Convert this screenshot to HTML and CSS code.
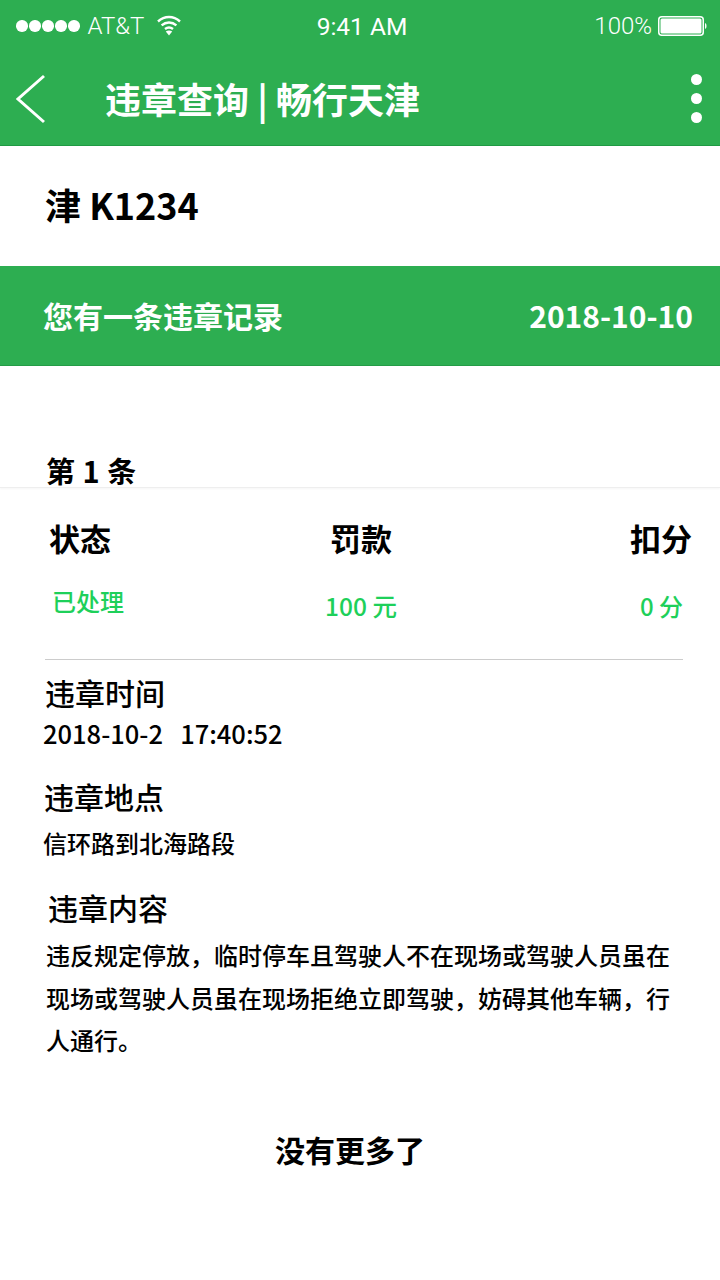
FILE: index.html
```html
<!DOCTYPE html>
<html lang="zh-CN">
<head>
<meta charset="utf-8">
<title>违章查询</title>
<link rel="stylesheet" href="styles.css">
</head>
<body>
<div class="app">
  <header class="top">
    <div class="status">
      <div class="status-left">
        <span class="dots"><i></i><i></i><i></i><i></i><i></i></span>
        <span class="carrier">AT&amp;T</span>
        <svg class="wifi" width="24" height="22" viewBox="0 0 24 22"><path d="M1 7.500C7.500 1.500 16.500 1.500 23 7.500M4.600 11.300C9 7.500 15 7.500 19.400 11.300M8 15C10.300 13.200 13.700 13.200 16 15" fill="none" stroke="#fff" stroke-width="2.400"/><path d="M12 21.500L8.800 17.500C10.800 16 13.200 16 15.200 17.500Z" fill="#fff"/></svg>
      </div>
      <div class="time">9:41 AM</div>
      <div class="status-right">
        <span class="pct">100%</span>
        <svg class="battery" width="50" height="20" viewBox="0 0 50 20"><rect x=".75" y=".75" width="44.500" height="18.500" rx="3" fill="none" stroke="#fff" stroke-width="1.500"/><rect x="2.500" y="2.500" width="41" height="15" rx="1.500" fill="#fff"/><path d="M47 7c2 .5 2 5.500 0 6z" fill="#fff"/></svg>
      </div>
    </div>
    <nav class="nav">
      <svg class="back" width="30" height="50" viewBox="0 0 30 50"><path d="M28 2L2 25L28 48" fill="none" stroke="#fff" stroke-width="3"/></svg>
      <h1 class="title">违章查询 | 畅行天津</h1>
      <div class="more"><i></i><i></i><i></i></div>
    </nav>
  </header>
  <section class="plate">津 K1234</section>
  <section class="banner"><span>您有一条违章记录</span><span class="date">2018-10-10</span></section>
  <section class="count"><div class="count-text">第 1 条</div></section>
  <section class="summary">
    <div class="col col-a"><div class="head">状态</div><div class="val val-a">已处理</div></div>
    <div class="col col-b"><div class="head">罚款</div><div class="val">100 元</div></div>
    <div class="col col-c"><div class="head">扣分</div><div class="val val-c">0 分</div></div>
  </section>
  <hr class="rule">
  <section class="detail d1"><h2>违章时间</h2><p class="time-val">2018-10-2 &nbsp; 17:40:52</p></section>
  <section class="detail d2"><h2>违章地点</h2><p>信环路到北海路段</p></section>
  <section class="detail d3"><h2>违章内容</h2><p class="body">违反规定停放，临时停车且驾驶人不在现场或驾驶人员虽在现场或驾驶人员虽在现场拒绝立即驾驶，妨碍其他车辆，行人通行。</p></section>
  <div class="end">没有更多了</div>
</div>
</body>
</html>
```
FILE: styles.css
```css
* { box-sizing: border-box; }
html, body { margin: 0; padding: 0; background: #fff; }
body { font-family: "Noto Sans CJK SC", "Noto Sans", sans-serif; color: #000; }
.app { width: 720px; height: 1280px; overflow: hidden; }
.top { height: 146px; background: #2dae51; border-bottom: 1px solid #1f9a43; color: #fff; }
.status { height: 52px; padding: 0 12px 0 16px; display: grid; grid-template-columns: 1fr auto 1fr; align-items: center; font-family: "Roboto", sans-serif; font-weight: 300; font-size: 24px; }
.status-left { display: flex; align-items: center; }
.dots { display: flex; gap: 1.500px; margin-right: 8px; }
.dots i { width: 11.500px; height: 11.500px; border-radius: 50%; background: #fff; display: block; }
.carrier { margin-right: 13px; }
.wifi { margin-bottom: 2px; }
.status-right { display: flex; justify-content: flex-end; align-items: center; gap: 6px; }
.time { font-weight: 400; font-size: 24.500px; }
.nav { height: 93px; padding: 0 16px; display: flex; align-items: center; }
.back { flex: none; }
.title { margin: 0 0 2px 59px; flex: 1; font-size: 36px; font-weight: 700; line-height: 50px; }
.more { display: flex; flex-direction: column; gap: 8px; margin-right: 2px; }
.more i { display: block; width: 11px; height: 11px; border-radius: 50%; background: #fff; }
.plate { height: 120px; padding: 0 0 4px 45px; display: flex; align-items: center; font-size: 36px; font-weight: 700; }
.banner { height: 100px; padding: 0 27px 2px 43px; background: #2dae51; border-bottom: 1px solid #249c46; color: #fff; display: flex; justify-content: space-between; align-items: center; font-size: 30px; font-weight: 700; }
.count { height: 122px; border-bottom: 1px solid #eee; box-shadow: 0 1px 2px rgba(0, 0, 0, .04); }
.count-text { padding: 88px 0 0 46px; font-size: 29px; font-weight: 700; line-height: 33px; word-spacing: 1px; }
.summary { height: 171px; padding: 27px 28px 0 49px; display: grid; grid-template-columns: 262px 100px 1fr; }
.col { display: flex; flex-direction: column; }
.col-b { align-items: center; }
.col-c { align-items: flex-end; }
.head { font-size: 31px; font-weight: 700; line-height: 46px; }
.val { color: #1ed05a; font-size: 24.500px; font-weight: 500; line-height: 36px; margin-top: 27px; }
.val-a { margin-top: 22px; margin-left: 3px; font-size: 24px; }
.val-c { padding-right: 9px; font-size: 24px; }
.rule { margin: 0 37px 0 45px; border: 0; height: 1px; background: #ccc; }
.detail h2 { margin: 0; font-size: 30px; font-weight: 500; line-height: 44px; }
.detail p { margin: 0; font-size: 24px; font-weight: 500; line-height: 36px; }
.d1 { padding: 10px 0 0 45px; }
.d1 .time-val { margin-left: -2px; font-size: 25.500px; line-height: 38px; }
.d2 { padding: 22px 0 0 44px; }
.d2 p { margin: 7px 0 0 -1px; }
.d3 { padding: 24px 46px 0 48px; }
.d3 p.body { margin: 5px 0 0 -2px; font-size: 24px; line-height: 42.500px; }
.end { margin-top: 65px; text-align: center; padding-right: 20px; font-size: 30px; font-weight: 700; line-height: 44px; }
```
